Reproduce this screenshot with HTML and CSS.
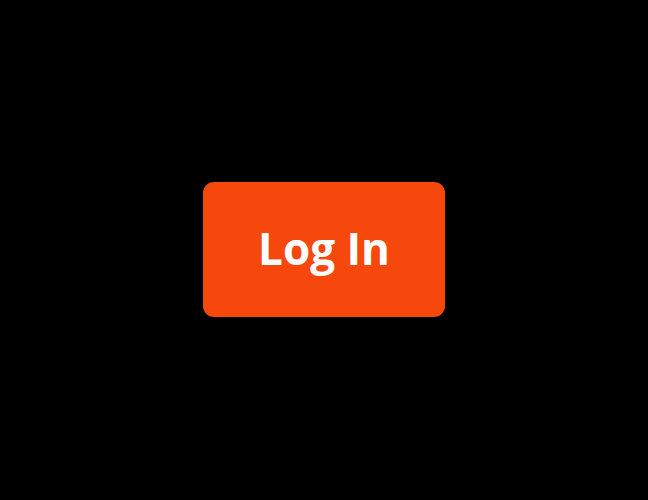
FILE: index.html
```html
<!DOCTYPE html>
<html>
<head>
<meta charset="utf-8">
<link rel="stylesheet" href="styles.css">
</head>
<body>
<main class="stage">
  <button class="login-btn">Log In</button>
</main>
</body>
</html>
```
FILE: styles.css
```css
html, body {
  margin: 0;
  padding: 0;
  background: #000;
  height: 100%;
}
.stage {
  height: 100vh;
  display: flex;
  align-items: center;
  justify-content: center;
}
.login-btn {
  width: 242px;
  height: 135px;
  margin-top: -1px;
  border: none;
  border-radius: 11px;
  background: #f6470c;
  color: #fff;
  font-family: "Open Sans", Lato, sans-serif;
  font-weight: 700;
  font-size: 44px;
  padding: 0 0 4px 0;
  cursor: pointer;
}
```
